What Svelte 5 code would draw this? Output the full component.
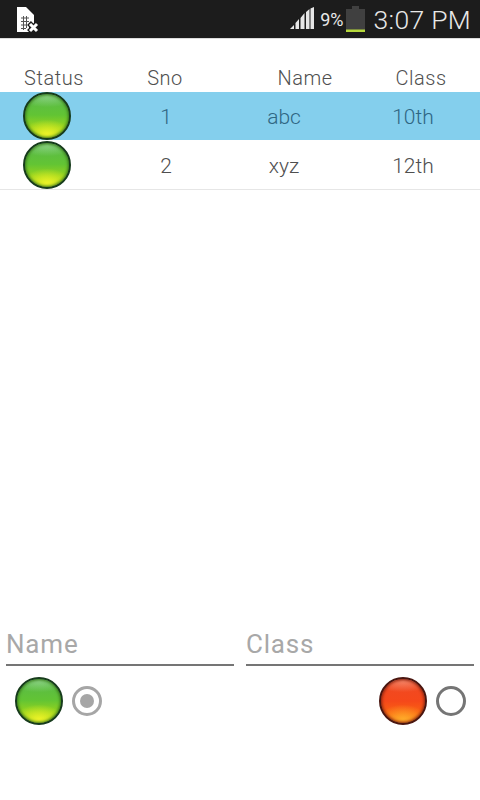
<script>
  const rows = [
    { sno: 1, name: "abc", cls: "10th", selected: true },
    { sno: 2, name: "xyz", cls: "12th", selected: false },
  ];
  let active = $state("green");
</script>

<div class="page">
  <div class="statusbar">
    <svg class="sim" width="26" height="30" viewBox="0 0 26 30">
      <path d="M2 3h9l8 8v9h-5v8H2z" fill="#fff" />
      <path d="M6 14h8M6 17.500h8M6 21h6M6 24.500h5M8.500 12v14M11.500 12v12" stroke="#555" stroke-width="1" fill="none" />
      <path d="M14 19l9 9M23 19l-9 9" stroke="#1c1c1c" stroke-width="5.500" />
      <path d="M15 20l7 7M22 20l-7 7" stroke="#fff" stroke-width="3" />
    </svg>
    <div class="right">
      <svg width="25" height="24" viewBox="0 0 25 24">
        <path d="M0 22l4-4v4zM5.500 22v-6l3.500-4v10zM10.500 22V11l4-5v16zM16 22V5l3.500-3v20zM20.500 22V1.500l3.500-1.500v22z" fill="#e6e6e6" />
      </svg>
      <span class="pct">9%</span>
      <svg class="battery" width="19" height="27" viewBox="0 0 19 27">
        <path d="M6 0h7v3h6v21H0V3h6z" fill="#404040" />
        <rect x="0" y="23.500" width="19" height="2.500" fill="#b6d83c" />
      </svg>
      <span class="clock">3:07 PM</span>
    </div>
  </div>

  <div class="head">
    <span>Status</span>
    <span>Sno</span>
    <span>Name</span>
    <span>Class</span>
  </div>

  <div class="list">
    {#each rows as row (row.sno)}
      <div class="row" class:selected={row.selected}>
        <div class="cell-ball"><span class="ball green"></span></div>
        <span class="cell">{row.sno}</span>
        <span class="cell">{row.name}</span>
        <span class="cell">{row.cls}</span>
      </div>
    {/each}
  </div>

  <div class="form">
    <div class="fields">
      <input placeholder="Name" />
      <input placeholder="Class" />
    </div>
    <div class="choices">
      <button class="choice" onclick={() => (active = "green")}>
        <span class="ball green"></span>
        <span class="radio" class:on={active === "green"}></span>
      </button>
      <button class="choice" onclick={() => (active = "red")}>
        <span class="ball red"></span>
        <span class="radio" class:on={active === "red"}></span>
      </button>
    </div>
  </div>
</div>

<style>
  :global(body) {
    margin: 0;
    background: #fff;
  }
  .page {
    width: 480px;
    height: 800px;
    display: flex;
    flex-direction: column;
    font-family: Roboto, "Liberation Sans", sans-serif;
    font-weight: 300;
    color: #4f4f4f;
    background: #fff;
  }
  .statusbar {
    height: 38px;
    flex-shrink: 0;
    background: #1c1c1c;
    display: flex;
    align-items: center;
    justify-content: space-between;
    padding: 0 9px 0 15px;
    border-bottom: 1px solid #ddd;
    box-sizing: content-box;
  }
  .right {
    display: flex;
    align-items: center;
    color: #e8e8e8;
  }
  .pct {
    font-size: 18px;
    font-weight: 400;
    margin: 0 2px 0 5px;
  }
  .battery {
    margin-top: 1px;
  }
  .clock {
    font-size: 26.500px;
    font-weight: 300;
    margin-left: 9px;
    letter-spacing: 0.3px;
  }
  .head {
    display: grid;
    grid-template-columns: 108px 114px 166px 66px;
    margin-top: 26px;
    height: 27px;
    font-size: 20px;
    letter-spacing: 0.55px;
    line-height: 26px;
    text-align: center;
  }
  .row {
    display: grid;
    grid-template-columns: 110px 112px 124px 134px;
    align-items: center;
    text-align: center;
    height: 48px;
    border-bottom: 1px solid #e6e6e6;
    font-size: 21px;
  }
  .cell {
    padding-top: 2px;
  }
  .row.selected {
    background: #84cfed;
    border-bottom-color: #fff;
    color: #2f6683;
  }
  .cell-ball {
    display: flex;
    padding-left: 23px;
  }
  .ball {
    display: block;
    width: 48px;
    height: 48px;
    box-sizing: border-box;
    border-radius: 50%;
    border: 2px solid #173c1c;
  }
  .ball.green {
    box-shadow: inset 0 0 3px 1px #3a7a1c;
    background:
      radial-gradient(ellipse 55% 34% at 50% 92%, #eef428, rgba(238, 244, 40, 0) 100%),
      radial-gradient(ellipse 70% 24% at 50% 6%, rgba(190, 235, 190, 0.45), transparent),
      linear-gradient(#58b84c, #62c434 48%, #98d41c 76%, #b8dc18);
  }
  .ball.red {
    border-color: #4a1610;
    box-shadow: inset 0 0 3px 1px #8a2410;
    background:
      radial-gradient(ellipse 55% 34% at 50% 92%, #ffac2a, rgba(255, 172, 42, 0) 100%),
      radial-gradient(ellipse 70% 24% at 50% 6%, rgba(255, 210, 190, 0.4), transparent),
      linear-gradient(#ee4a26, #f5481a 50%, #fa6412 78%, #fc8414);
  }
  .form {
    margin-top: auto;
    padding: 0 6px;
    height: 174px;
  }
  .fields {
    display: grid;
    grid-template-columns: 228px 228px;
    gap: 12px;
  }
  input {
    width: 100%;
    box-sizing: border-box;
    height: 40px;
    padding: 0 0 2px;
    border: none;
    border-bottom: 2px solid #757575;
    outline: none;
    font: inherit;
    font-size: 26px;
    font-weight: 400;
    letter-spacing: 0.8px;
    background: none;
    color: #444;
  }
  input::placeholder {
    color: #a8a8a8;
    opacity: 1;
  }
  .choices {
    display: flex;
    justify-content: space-between;
    padding: 11px 8px 0 9px;
  }
  .choice {
    display: flex;
    align-items: center;
    gap: 9px;
    padding: 0;
    border: none;
    background: none;
  }
  .radio {
    display: block;
    width: 30px;
    height: 30px;
    box-sizing: border-box;
    border-radius: 50%;
    border: 3px solid #757575;
    position: relative;
  }
  .radio.on {
    border-color: #a6a6a6;
  }
  .radio.on::after {
    content: "";
    position: absolute;
    inset: 5px;
    border-radius: 50%;
    background: #a6a6a6;
  }
</style>
